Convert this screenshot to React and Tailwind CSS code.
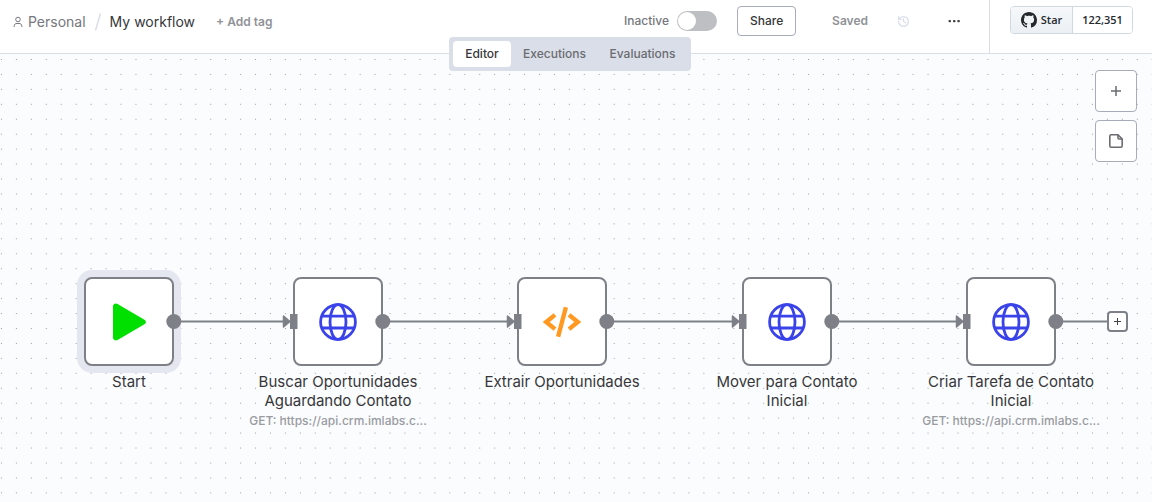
import React from "react";

const nodes = [
  { id: "start", x: 84, label: "Start", icon: "play", selected: true },
  { id: "fetch", x: 293, label: "Buscar Oportunidades Aguardando Contato", icon: "globe", note: "GET: https://api.crm.imlabs.c..." },
  { id: "extract", x: 517, label: "Extrair Oportunidades", icon: "code" },
  { id: "move", x: 742, label: "Mover para Contato Inicial", icon: "globe" },
  { id: "task", x: 966, label: "Criar Tarefa de Contato Inicial", icon: "globe", note: "GET: https://api.crm.imlabs.c..." },
];

function NodeIcon({ name }) {
  if (name === "play")
    return (
      <svg width="38" height="38" viewBox="0 0 38 38" fill="#00e000" aria-hidden="true">
        <path d="M3 3.4C3 .9 5.5-.3 7.6 1L34 16.4c2.6 1.5 2.6 3.7 0 5.2L7.6 37C5.5 38.2 3 37.100 3 34.600Z" />
      </svg>
    );
  if (name === "code")
    return (
      <svg width="38" height="38" viewBox="0 0 38 38" fill="none" stroke="#ff9922" strokeWidth="4.400" aria-hidden="true">
        <path d="M12 11.900 3.300 19l8.700 7.100M26 11.900 34.700 19l-8.700 7.100" />
        <path d="M22.900 4.300 15.100 33.700" />
      </svg>
    );
  return (
    <svg width="38" height="38" viewBox="0 0 38 38" fill="none" stroke="#3a42e9" strokeWidth="2.800" aria-hidden="true">
      <circle cx="19" cy="19" r="17.400" />
      <ellipse cx="19" cy="19" rx="8" ry="17.400" />
      <path d="M2.500 13.200h33M2.500 25h33" />
    </svg>
  );
}

function WorkflowNode({ node }) {
  return (
    <div className="absolute top-[223px] w-[90px]" style={{ left: node.x }}>
      <div
        className={
          "flex h-[89px] items-center justify-center rounded-lg border-2 border-[#7d8087] bg-white " +
          (node.selected ? "ring-[7px] ring-[#e5e7f0]" : "")
        }
      >
        <NodeIcon name={node.icon} />
      </div>
      <div className="-mx-12 mt-1.5 flex flex-col items-center text-center">
        <p className="w-[176px] text-[15px] leading-[19px] text-[#36373a]">{node.label}</p>
        {node.note && (
          <p className="mt-0.5 text-[12px] leading-[18px] font-medium whitespace-nowrap text-[#999ba1]">{node.note}</p>
        )}
      </div>
    </div>
  );
}

function Connections() {
  return (
    <svg className="pointer-events-none absolute inset-0 h-full w-full" fill="#7d8087" aria-hidden="true">
      {nodes.map((n, i) => {
        const next = nodes[i + 1];
        const from = n.x + 90;
        return (
          <g key={n.id}>
            <path d={`M${from} 267.500H${next ? next.x - 8 : 1108}`} stroke="#7d8087" strokeWidth="2" />
            <circle cx={from - 0.2} cy="267.500" r="7.500" />
            {next && (
              <g transform={`translate(${next.x} 0)`}>
                <path d="M-9.500 262 -3 267.500-9.500 273Z" stroke="#7d8087" strokeWidth="1.500" strokeLinejoin="round" />
                <rect x="-3" y="260" width="7.500" height="15" />
              </g>
            )}
          </g>
        );
      })}
    </svg>
  );
}

function DotGrid() {
  return (
    <svg className="absolute inset-0 h-full w-full" aria-hidden="true">
      <defs>
        <pattern id="dots" x="-6" y="-2" width="14.945" height="14.945" patternUnits="userSpaceOnUse">
          <circle cx="7.470" cy="7.470" r="0.600" fill="#909298" />
        </pattern>
      </defs>
      <rect width="100%" height="100%" fill="url(#dots)" />
    </svg>
  );
}

function Header() {
  return (
    <header className="flex h-[54px] border-b border-[#d9dee8] bg-white">
      <div className="flex h-[43px] flex-1 items-center pl-[13px]">
        <nav aria-label="Breadcrumb" className="flex items-center">
          <a href="#personal" className="flex items-center gap-[5px] text-[14px] text-[#75777d]">
            <svg width="10" height="12" viewBox="0 0 10 12" fill="none" stroke="#75777d" aria-hidden="true">
              <circle cx="5" cy="3.500" r="2.300" />
              <path d="M1.200 11V9.800C1.200 8.200 2.500 7.500 4 7.500h2c1.500 0 2.800.7 2.800 2.300V11" />
            </svg>
            Personal
          </a>
          <svg className="mx-[9px]" width="6" height="18" viewBox="0 0 6 18" stroke="#d9dee8" strokeWidth="1.500" aria-hidden="true">
            <path d="M5.500.5.500 17.500" />
          </svg>
          <span className="text-[14px] text-[#36373a]">My workflow</span>
        </nav>
        <button type="button" className="ml-[21px] text-[12px] font-semibold text-[#909298]">+ Add tag</button>
      </div>
      <div className="flex h-[42px] items-center">
        <label htmlFor="active" className="text-[12px] font-medium text-[#75777d]">Inactive</label>
        <span className="relative ml-2 flex h-5 w-10">
          <input
            id="active"
            type="checkbox"
            role="switch"
            className="peer h-5 w-10 appearance-none rounded-full bg-[#bebfc3]"
          />
          <span className="pointer-events-none absolute top-px left-px h-[18px] w-[18px] rounded-full bg-white peer-checked:left-[21px]" />
        </span>
        <button type="button" className="ml-5 h-[30px] w-[59px] rounded border border-[#a7abba] bg-white text-[12px] font-medium text-[#36373a]">
          Share
        </button>
        <span className="ml-9 text-[12px] font-semibold text-[#909298]">Saved</span>
        <button type="button" aria-label="Workflow history" className="ml-[29px]">
          <svg width="13" height="13" viewBox="0 0 24 24" fill="none" stroke="#d9dee8" strokeWidth="2.400" strokeLinecap="round" strokeLinejoin="round" aria-hidden="true">
            <path d="M3 12a9 9 0 1 0 9-9 9.750 9.750 0 0 0-6.740 2.740L3 8" />
            <path d="M3 3v5h5M12 7v5l4 2" />
          </svg>
        </button>
        <button type="button" aria-label="More actions" className="mr-[29px] ml-[38px]">
          <svg width="12" height="12" viewBox="0 0 12 12" fill="#414244" aria-hidden="true">
            <rect x="0.500" y="5" width="2.500" height="2.300" rx=".8" />
            <rect x="5" y="5" width="2.500" height="2.300" rx=".8" />
            <rect x="9.300" y="5" width="2.500" height="2.300" rx=".8" />
          </svg>
        </button>
      </div>
      <div className="border-l border-[#d9dee8] pt-1.5 pr-[19px] pl-5">
        <div className="flex h-7 overflow-hidden rounded border border-[#d1d9e0] font-['Open_Sans','Noto_Sans',sans-serif] text-[11px] font-semibold text-[#25292e]">
          <a href="#star" className="flex w-[62px] items-center justify-center gap-1 border-r border-[#d1d9e0] bg-linear-to-b from-[#f6f8fa] to-[#ebf0f4]">
            <svg width="16" height="16" viewBox="0 0 16 16" fill="#25292e" aria-hidden="true">
              <path d="M8 0C3.580 0 0 3.580 0 8c0 3.540 2.290 6.530 5.470 7.590.4.070.550-.170.550-.380 0-.190-.010-.820-.010-1.490-2.010.370-2.530-.490-2.690-.940-.090-.230-.480-.940-.820-1.130-.280-.150-.680-.520-.010-.530.630-.010 1.080.580 1.230.820.720 1.210 1.870.870 2.330.660.070-.520.280-.870.510-1.070-1.780-.200-3.640-.890-3.640-3.950 0-.870.310-1.590.820-2.150-.080-.200-.360-1.020.080-2.120 0 0 .670-.210 2.200.820.640-.180 1.320-.270 2-.270s1.360.090 2 .270c1.530-1.040 2.200-.820 2.200-.820.440 1.100.160 1.920.080 2.120.510.560.820 1.270.820 2.150 0 3.070-1.870 3.750-3.650 3.950.290.250.540.730.540 1.480 0 1.070-.010 1.930-.010 2.200 0 .210.150.460.550.380A8.010 8.010 0 0 0 16 8c0-4.420-3.580-8-8-8Z" />
            </svg>
            Star
          </a>
          <a href="#stargazers" className="flex w-[59px] items-center justify-center bg-white">122,351</a>
        </div>
      </div>
    </header>
  );
}

function Tabs() {
  const base = "h-[26px] rounded text-[12px] font-medium";
  return (
    <div className="pointer-events-none absolute inset-x-0 top-[37px] z-10 flex justify-center pr-3">
      <div role="tablist" className="pointer-events-auto flex rounded bg-[#d9dee8] p-1">
        <button type="button" role="tab" aria-selected="true" className={base + " w-[58px] bg-white text-[#36373a]"}>Editor</button>
        <button type="button" role="tab" aria-selected="false" className={base + " w-[87px] text-[#6b6c70]"}>Executions</button>
        <button type="button" role="tab" aria-selected="false" className={base + " w-[89px] text-[#6b6c70]"}>Evaluations</button>
      </div>
    </div>
  );
}

export default function App() {
  return (
    <div className="relative flex min-h-screen flex-col bg-[#fbfcfe] font-['Inter',sans-serif]">
      <Header />
      <Tabs />
      <main className="relative flex-1 overflow-hidden">
        <DotGrid />
        {nodes.map((n) => (
          <WorkflowNode key={n.id} node={n} />
        ))}
        <Connections />
        <button
          type="button"
          aria-label="Add next step"
          className="absolute top-[257px] left-[1107px] flex h-[21px] w-[21px] items-center justify-center rounded border-2 border-[#7d8087] bg-white"
        >
          <svg width="9" height="9" viewBox="0 0 9 9" stroke="#414244" aria-hidden="true">
            <path d="M4.500 1v7M1 4.500h7" />
          </svg>
        </button>
        <div className="absolute top-4 right-[15px] flex flex-col gap-2">
          <button type="button" aria-label="Add node" className="flex h-[42px] w-[42px] items-center justify-center rounded border border-[#a7abba] bg-white">
            <svg width="12" height="12" viewBox="0 0 12 12" stroke="#6b6c70" strokeWidth="1.500" aria-hidden="true">
              <path d="M6 1v10M1 6h10" />
            </svg>
          </button>
          <button type="button" aria-label="Add sticky note" className="flex h-[42px] w-[42px] items-center justify-center rounded border border-[#a7abba] bg-white">
            <svg width="14" height="14" viewBox="0 0 14 14" fill="none" stroke="#6b6c70" strokeWidth="1.600" strokeLinejoin="round" aria-hidden="true">
              <path d="M9 .8H2.200C1.400.8.800 1.400.800 2.200v9.600c0 .8.600 1.400 1.400 1.400h9.600c.8 0 1.400-.6 1.400-1.400V5Z" />
              <path d="M9 .8V4c0 .600.400 1 1 1h3.200" />
            </svg>
          </button>
        </div>
      </main>
    </div>
  );
}
